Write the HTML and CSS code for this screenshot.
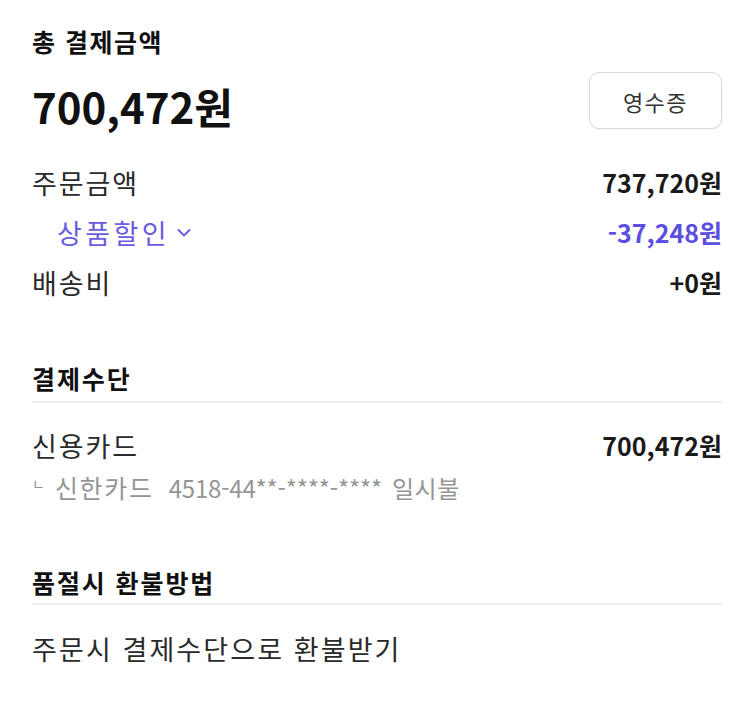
FILE: index.html
```html
<!DOCTYPE html>
<html lang="ko">
<head>
<meta charset="utf-8">
<link rel="stylesheet" href="styles.css">
</head>
<body>
<div class="page">
  <div class="total-title">총 결제금액</div>
  <div class="total-row">
    <div class="total-amount">700,472원</div>
    <button class="receipt">영수증</button>
  </div>

  <div class="rows">
    <div class="row">
      <span class="label">주문금액</span>
      <span class="value">737,720원</span>
    </div>
    <div class="row">
      <span class="label sub">상품할인<svg class="chev" width="16" height="10" viewBox="0 0 16 10"><path d="M2.5 2 L8 7.5 L13.5 2" fill="none" stroke="#6a5ce0" stroke-width="2" stroke-linecap="round" stroke-linejoin="round"/></svg></span>
      <span class="value discount">-37,248원</span>
    </div>
    <div class="row">
      <span class="label">배송비</span>
      <span class="value">+0원</span>
    </div>
  </div>

  <div class="section-title first">결제수단</div>
  <div class="row pay-row">
    <span class="label">신용카드</span>
    <span class="value">700,472원</span>
  </div>
  <div class="card-detail"><span class="corner">ㄴ</span><span class="card-name">신한카드</span><span class="card-num">4518-44**-****-****</span><span class="card-plan">일시불</span></div>

  <div class="section-title second">품절시 환불방법</div>
  <div class="refund">주문시 결제수단으로 환불받기</div>
</div>
</body>
</html>
```

FILE: styles.css
```css
* { box-sizing: border-box; }
body {
  margin: 0;
  background: #fff;
  font-family: "Noto Sans CJK KR", "Noto Sans", sans-serif;
  color: #222;
}
.page {
  padding: 26px 28px 0 32px;
}
.total-title {
  font-size: 25px;
  font-weight: 700;
  line-height: 30px;
  color: #111;
  letter-spacing: 1.5px;
}
.total-row {
  display: flex;
  justify-content: space-between;
  align-items: flex-start;
  margin-top: 16px;
}
.total-amount {
  margin-top: 9px;
  font-size: 42px;
  font-weight: 700;
  line-height: 50px;
  color: #111;
}
.receipt {
  width: 133px;
  height: 57px;
  border: 1.5px solid #d8d8d8;
  border-radius: 10px;
  background: #fff;
  font-family: inherit;
  font-size: 22px;
  letter-spacing: 1.5px;
  color: #333;
  box-shadow: 0 1px 2px rgba(0,0,0,0.05);
}
.rows {
  margin-top: 26px;
}
.row {
  display: flex;
  justify-content: space-between;
  align-items: center;
  height: 50px;
}
.label {
  font-size: 27px;
  letter-spacing: 1.9px;
  color: #2a2a2a;
  display: flex;
  align-items: center;
}
.label.sub {
  padding-left: 25px;
  color: #6a5ce0;
  letter-spacing: 3.4px;
}
.chev {
  margin-left: 6px;
  margin-top: 2px;
}
.value {
  font-size: 25px;
  font-weight: 700;
  color: #1a1a1a;
}
.value.discount {
  color: #5b4ee0;
}
.section-title {
  font-size: 25px;
  font-weight: 700;
  line-height: 30px;
  color: #111;
  letter-spacing: 1.9px;
  padding-bottom: 8px;
  border-bottom: 2px solid #eeeeee;
}
.section-title.first {
  margin-top: 56px;
}
.section-title.second {
  margin-top: 62px;
  padding-bottom: 6px;
}
.pay-row {
  margin-top: 17px;
}
.card-detail {
  font-size: 25px;
  line-height: 34px;
  color: #959595;
  display: flex;
  align-items: baseline;
}
.corner {
  font-size: 14px;
  align-self: flex-start;
  line-height: 26px;
  margin-right: 10px;
}
.card-name {
  letter-spacing: 1.7px;
  margin-right: 15px;
}
.card-num {
  font-size: 24px;
  letter-spacing: -0.2px;
  margin-right: 10px;
}
.card-plan {
  font-size: 24px;
  letter-spacing: 0.5px;
}
.refund {
  margin-top: 19px;
  font-size: 27px;
  letter-spacing: 2.1px;
  line-height: 50px;
  color: #2a2a2a;
}
```
